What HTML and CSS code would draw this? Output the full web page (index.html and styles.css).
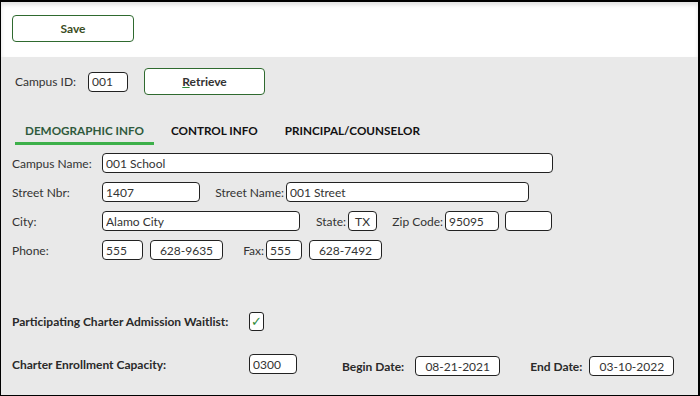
FILE: index.html
```html
<!DOCTYPE html>
<html lang="en">
<head>
<meta charset="UTF-8">
<meta name="viewport" content="width=device-width, initial-scale=1.0">
<title>Campus Profile</title>
<link rel="stylesheet" href="styles.css">
</head>
<body>

<div class="frame">
    <div class="toolbar">
        <button class="btn btn-save" type="button">Save</button>
    </div>

    <div class="main">
        <!-- Campus lookup -->
        <div class="lookup">
            <label class="lookup-label" for="campus_id">Campus ID:</label>
            <input class="field w-id" type="text" id="campus_id" value="001">
            <button class="btn btn-retrieve" type="button"><u>R</u>etrieve</button>
        </div>

        <!-- Tabs -->
        <div class="tabs">
            <a class="tab active" href="#demographic">DEMOGRAPHIC INFO</a>
            <a class="tab" href="#control">CONTROL INFO</a>
            <a class="tab" href="#principal">PRINCIPAL/COUNSELOR</a>
        </div>

        <!-- Demographic info -->
        <div class="row">
            <label class="lbl">Campus Name:</label>
            <input class="field w-name" type="text" value="001 School">
        </div>
        <div class="row">
            <label class="lbl">Street Nbr:</label>
            <input class="field w-nbr" type="text" value="1407">
            <label class="lbl-in w-street-lbl">Street Name:</label>
            <input class="field w-street" type="text" value="001 Street">
        </div>
        <div class="row">
            <label class="lbl">City:</label>
            <input class="field w-city" type="text" value="Alamo City">
            <label class="lbl-in w-state-lbl">State:</label>
            <input class="field w-state center" type="text" value="TX">
            <label class="lbl-in w-zip-lbl">Zip Code:</label>
            <input class="field w-zip" type="text" value="95095">
            <input class="field w-zip4" type="text" value="">
        </div>
        <div class="row">
            <label class="lbl">Phone:</label>
            <input class="field w-area" type="text" value="555">
            <input class="field w-phone center" type="text" value="628-9635">
            <label class="lbl-in w-fax-lbl">Fax:</label>
            <input class="field w-area fax" type="text" value="555">
            <input class="field w-phone center" type="text" value="628-7492">
        </div>

        <!-- Charter -->
        <div class="row row-waitlist">
            <label class="lbl-strong">Participating Charter Admission Waitlist:</label>
            <span class="check">&#10003;</span>
        </div>
        <div class="row row-capacity">
            <label class="lbl-strong">Charter Enrollment Capacity:</label>
            <input class="field w-cap" type="text" value="0300">
            <label class="lbl-date begin">Begin Date:</label>
            <input class="field w-date center" type="text" value="08-21-2021">
            <label class="lbl-date end">End Date:</label>
            <input class="field w-date center" type="text" value="03-10-2022">
        </div>
    </div>
</div>

</body>
</html>
```

FILE: styles.css
```css
body {
    font-family: Lato, "Open Sans", sans-serif;
    margin: 0;
    padding: 0;
    color: #333;
}

.frame {
    width: 700px;
    height: 396px;
    box-sizing: border-box;
    border: 1px solid #000;
    border-top-width: 2px;
    border-right-width: 2px;
    background-color: #e9e9e9;
    overflow: hidden;
}

.toolbar {
    height: 55px;
    box-sizing: border-box;
    padding: 13px 11px 0;
    background-color: white;
    box-shadow: inset 0 3px 4px rgba(0, 0, 0, 0.12);
}

.btn {
    font-family: Lato, sans-serif;
    font-size: 12px;
    font-weight: bold;
    background-color: white;
    border: 1px solid #2f6a2f;
    border-radius: 4px;
    cursor: pointer;
}

.btn-save {
    width: 122px;
    height: 27px;
    color: #3b4d24;
}

.btn-retrieve {
    width: 121px;
    height: 27px;
    margin-left: 16px;
    color: #333;
}

.btn-retrieve u {
    text-decoration-color: #2f8a3a;
}

.main {
    padding: 11px 0 0 11px;
}

.lookup {
    display: flex;
    align-items: center;
}

.lookup-label {
    font-size: 12px;
    margin-left: 3px;
    width: 73px;
}

/* Inputs */
.field {
    font-family: Lato, sans-serif;
    font-size: 12px;
    color: #333;
    height: 20px;
    box-sizing: border-box;
    padding: 0 3px;
    border: 1px solid #222;
    border-radius: 4px;
    background-color: white;
}

.field.center {
    text-align: center;
}

.w-id { width: 40px; }
.w-name { width: 451px; }
.w-nbr { width: 98px; }
.w-street { width: 243px; }
.w-city { width: 198px; }
.w-state { width: 29px; padding: 0; }
.w-zip { width: 54px; }
.w-zip4 { width: 47px; margin-left: 6px; }
.w-area { width: 41px; }
.w-area.fax { width: 36px; }
.w-phone { width: 73px; margin-left: 7px; }
.w-cap { width: 48px; }
.w-date { width: 85px; }

/* Tabs */
.tabs {
    display: flex;
    margin: 20px 0 0 3px;
}

.tab {
    font-size: 11.7px;
    font-weight: bold;
    color: #111;
    text-decoration: none;
    line-height: 14px;
    padding: 8px 10px 5px;
    margin-right: 7px;
    border-bottom: 3px solid transparent;
}

.tab.active {
    color: #2f5a3c;
    border-bottom-color: #3db04a;
}

/* Form rows */
.row {
    display: flex;
    align-items: center;
    margin-top: 9px;
    font-size: 12px;
}

.tabs + .row {
    margin-top: 8px;
}

.lbl {
    width: 90px;
    flex-shrink: 0;
}

.lbl-in {
    text-align: right;
    white-space: nowrap;
    padding-right: 2px;
}

.w-street-lbl { width: 70px; margin-left: 14px; }
.w-state-lbl { width: 46px; }
.w-zip-lbl { width: 66px; }
.w-fax-lbl { width: 41px; }

.row-waitlist {
    margin-top: 52px;
}

.row-capacity {
    margin-top: 21px;
}

.lbl-strong {
    width: 237px;
    flex-shrink: 0;
    font-weight: bold;
    color: #2a2a2a;
    font-size: 12px;
}

.check {
    width: 13px;
    height: 17px;
    border: 1px solid #222;
    border-radius: 3px;
    background-color: white;
    color: #2f8a3a;
    font-size: 13px;
    line-height: 17px;
    text-align: center;
}

.lbl-date {
    font-weight: bold;
    color: #2a2a2a;
    margin-top: 4px;
}

.lbl-date.begin {
    margin-left: 45px;
    margin-right: 11px;
}

.lbl-date.end {
    margin-left: 30px;
    margin-right: 7px;
}

.row-capacity .w-date {
    margin-top: 4px;
}
```
